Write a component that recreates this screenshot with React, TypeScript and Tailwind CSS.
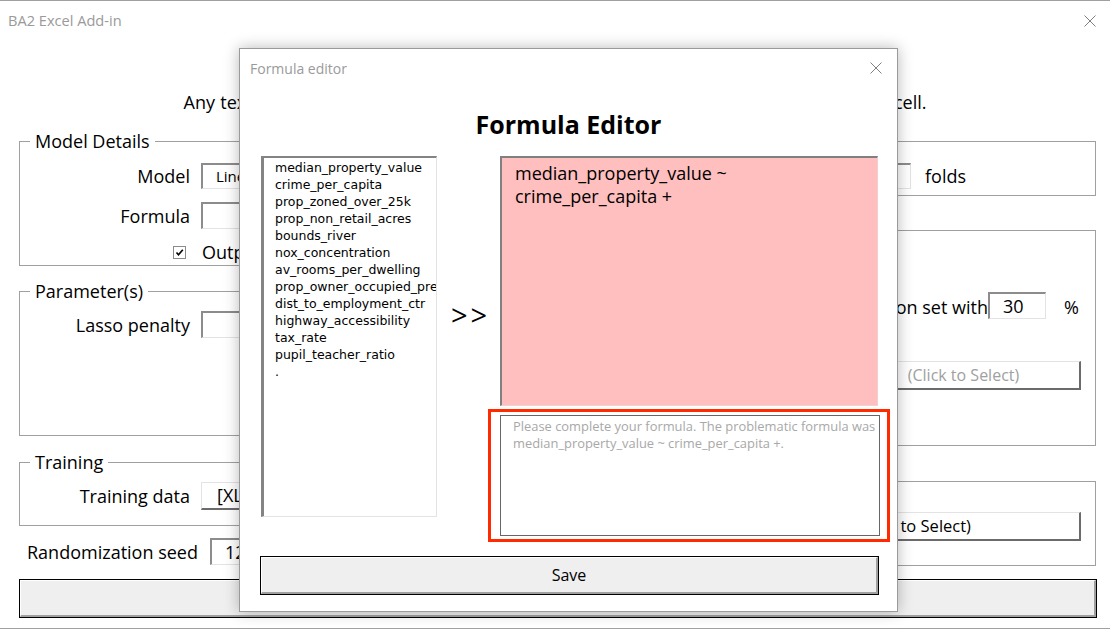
import React from 'react';

const sunken =
  'border-t-2 border-l-2 border-t-[#8c8c8c] border-l-[#8c8c8c] border-b border-r border-b-[#e3e3e3] border-r-[#e3e3e3] bg-white';
const raised =
  'border-t border-l border-t-[#e3e3e3] border-l-[#e3e3e3] border-b-2 border-r-2 border-b-[#6b6b6b] border-r-[#6b6b6b] bg-white';

const CloseIcon = () => (
  <svg width="12" height="12" viewBox="0 0 12 12" className="block">
    <path d="M0.5 0.5 L11.5 11.5 M11.5 0.5 L0.5 11.5" stroke="#808080" strokeWidth="1" fill="none" />
  </svg>
);

const GroupBox: React.FC<{ title?: string; className?: string; children?: React.ReactNode }> = ({
  title,
  className = '',
  children,
}) => (
  <div className={`relative border border-[#a0a0a0] ${className}`}>
    {title && (
      <span className="absolute left-[10px] -top-[13px] bg-white px-[5px] text-[18px] leading-[24px]">
        {title}
      </span>
    )}
    {children}
  </div>
);

const FieldRow: React.FC<{ label: string; className?: string; children: React.ReactNode }> = ({
  label,
  className = '',
  children,
}) => (
  <div className={`flex items-center ${className}`}>
    <span className="w-[170px] text-right text-[18px] leading-[24px]">{label}</span>
    <div className="ml-[11px]">{children}</div>
  </div>
);

const WinButton: React.FC<{ className?: string; children: React.ReactNode }> = ({ className = '', children }) => (
  <div className={`border border-black ${className}`}>
    <div className="h-full w-full border-t border-l border-t-white border-l-white border-b-2 border-r-2 border-b-[#a0a0a0] border-r-[#a0a0a0] bg-[#efefef] flex items-center justify-center">
      {children}
    </div>
  </div>
);

const variables = [
  'median_property_value',
  'crime_per_capita',
  'prop_zoned_over_25k',
  'prop_non_retail_acres',
  'bounds_river',
  'nox_concentration',
  'av_rooms_per_dwelling',
  'prop_owner_occupied_pre_1940',
  'dist_to_employment_ctr',
  'highway_accessibility',
  'tax_rate',
  'pupil_teacher_ratio',
  '.',
];

export default function App() {
  return (
    <div className="relative h-[630px] w-[1110px] overflow-hidden bg-white border-t border-[#a0a0a0] font-['Open_Sans',sans-serif] text-black">
      {/* title bar */}
      <div className="flex h-[39px] items-center justify-between pl-[8px] pr-[14px]">
        <span className="text-[14.6px] text-[#9a9a9a]">BA2 Excel Add-in</span>
        <CloseIcon />
      </div>

      <div className="mx-auto mt-[50px] w-[743px] text-[18px] leading-[24px] text-justify [text-align-last:justify]">
        Any text in square brackets can be clicked to pick a range directly from the selected cell.
      </div>

      <div className="pl-[19px] pr-[14px] mt-[27px]">
        <div className="grid grid-cols-[526px_1fr] gap-x-[15px]">
          {/* left column */}
          <div className="flex flex-col">
            <GroupBox title="Model Details" className="h-[125px] pt-[21px]">
              <FieldRow label="Model">
                <div className={`${sunken} h-[26px] w-[320px] pl-[13px] text-[15px] leading-[22px]`}>Linear regression</div>
              </FieldRow>
              <FieldRow label="Formula" className="mt-[13px]">
                <div className={`${sunken} h-[27px] w-[320px]`} />
              </FieldRow>
              <div className="mt-[11px] flex items-center pl-[153px]">
                <div className="flex h-[13px] w-[13px] items-center justify-center border border-[#8c8c8c] bg-white">
                  <svg width="9" height="9" viewBox="0 0 9 9">
                    <path d="M1.5 4.5 L3.5 6.8 L7.8 1.8" stroke="#000" strokeWidth="1.6" fill="none" />
                  </svg>
                </div>
                <span className="ml-[16px] text-[18px] leading-[24px]">Output fitted values</span>
              </div>
            </GroupBox>

            <GroupBox title="Parameter(s)" className="mt-[25px] h-[145px] pt-[19px]">
              <FieldRow label="Lasso penalty">
                <div className={`${sunken} h-[27px] w-[320px]`} />
              </FieldRow>
            </GroupBox>

            <GroupBox title="Training" className="mt-[26px] h-[64px] pt-[19px]">
              <FieldRow label="Training data">
                <div className={`${raised} h-[28px] w-[320px] pl-[15px] text-[18px] leading-[24px]`}>[XLS] Sheet1!A1:N507</div>
              </FieldRow>
            </GroupBox>

            <div className="mt-[12px] flex items-center pl-[8px]">
              <span className="text-[18px] leading-[24px]">Randomization seed</span>
              <div className={`${sunken} ml-[12px] h-[27px] w-[120px] pl-[13px] text-[18px] leading-[24px]`}>12345</div>
            </div>
          </div>

          {/* right column */}
          <div className="flex flex-col">
            <GroupBox className="h-[55px]">
              <div className="mt-[21px] flex items-center pl-[20px]">
                <span className="flex-1 pr-[8px] text-right text-[18px] leading-[24px]">Cross-validation with</span>
                <div className={`${sunken} h-[26px] w-[50px]`} />
                <span className="ml-[14px] w-[170px] text-[18px] leading-[24px]">folds</span>
              </div>
            </GroupBox>

            <GroupBox className="mt-[34px] h-[216px]">
              <div className="mt-[61px] flex items-center pl-[20px]">
                <span className="flex-1 pt-[3px] text-right text-[18px] leading-[24px]">Hold out a validation set with</span>
                <div className={`${sunken} h-[27px] w-[58px] pl-[13px] text-[18px] leading-[24px]`}>30</div>
                <span className="ml-[18px] w-[31px] pt-[3px] text-[18px] leading-[24px]">%</span>
              </div>
              <div className="mt-[42px] flex justify-end pr-[14px]">
                <div className={`${raised} flex h-[29px] w-[234px] items-center justify-center text-[16px] text-[#a0a0a0]`}>
                  (Click to Select)
                </div>
              </div>
            </GroupBox>

            <GroupBox className="mt-[35px] h-[85px]">
              <div className="mt-[30px] flex items-center justify-end pr-[14px]">
                <span className="mr-[14px] text-[18px]">Validation data</span>
                <div className={`${raised} flex h-[29px] w-[334px] items-center justify-center text-[16.5px]`}>
                  (Click to Select)
                </div>
              </div>
            </GroupBox>
          </div>
        </div>

        <WinButton className="mt-[13px] h-[39px] w-[1078px]">
          <span className="text-[18px]">Run</span>
        </WinButton>
      </div>

      <div className="mt-[10px] border-t border-[#a0a0a0] pl-[15px] text-[13px] leading-[18px] text-[#555]">
        View model help
      </div>

      {/* Formula editor dialog */}
      <div className="absolute left-[239px] top-[47px] h-[564px] w-[659px] border border-[#9a9a9a] bg-white shadow-[0_0_14px_rgba(0,0,0,0.28)]">
        <div className="flex h-[38px] items-center justify-between pl-[10px] pr-[15px]">
          <span className="text-[14px] text-[#9a9a9a]">Formula editor</span>
          <CloseIcon />
        </div>

        <h1 className="mt-[20px] text-center text-[25px] font-bold leading-[34px]">Formula Editor</h1>

        <div className="mt-[15px] flex pl-[21px]">
          <div className="h-[361px] w-[176px] overflow-hidden border-t-2 border-l-[3px] border-t-[#848484] border-l-[#848484] border-r border-b border-r-[#e3e3e3] border-b-[#e3e3e3] pl-[11px] pt-[1px] font-['DejaVu_Sans',sans-serif] text-[12.5px] leading-[17px]">
            {variables.map((v) => (
              <div key={v} className="whitespace-nowrap">
                {v}
              </div>
            ))}
          </div>

          <div className="w-[63px] pl-[14px] pt-[144px] text-[29px] leading-[30px] tracking-[3px]">&gt;&gt;</div>

          <div className="flex flex-col">
            <div className="h-[250px] w-[378px] border-t-2 border-l-2 border-t-[#808080] border-l-[#808080] border-r border-b border-r-[#f0d0d0] border-b-[#f0d0d0] bg-[#ffbfbf] px-[13px] pt-[4px] text-[18px] leading-[23px]">
              median_property_value ~
              <br />
              crime_per_capita +
            </div>
            <div className="-ml-[12px] mt-[3px] h-[133px] w-[402px] border-[3px] border-[#ff2a00] pl-[9px] pt-[3px]">
              <div className="h-[121px] w-[380px] border border-[#666] pl-[12px] pr-[2px] pt-[2px] text-[12.9px] leading-[17px] text-[#a8a8a8]">
                Please complete your formula. The problematic formula was median_property_value ~ crime_per_capita +.
              </div>
            </div>
          </div>
        </div>

        <WinButton className="ml-[20px] mt-[14px] h-[39px] w-[619px]">
          <span className="text-[16px]">Save</span>
        </WinButton>
      </div>
    </div>
  );
}
